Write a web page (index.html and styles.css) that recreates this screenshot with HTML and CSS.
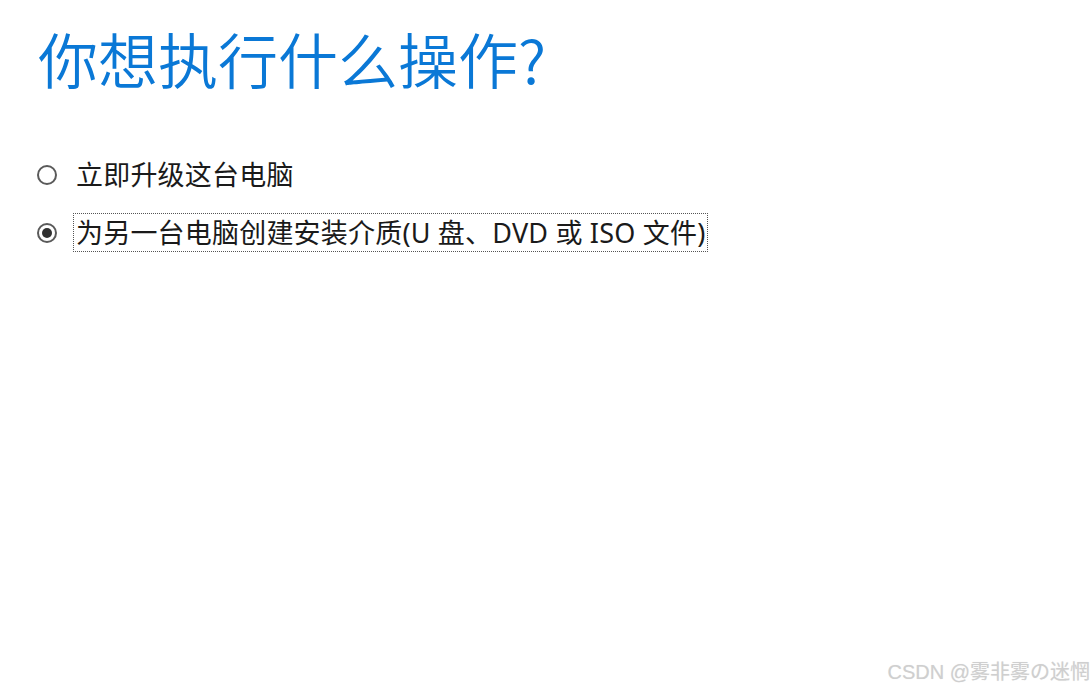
FILE: index.html
```html
<!DOCTYPE html>
<html lang="zh-CN">
<head>
<meta charset="utf-8">
<title>你想执行什么操作?</title>
<link rel="stylesheet" href="styles.css">
</head>
<body>
<main class="page">
  <h1 class="title">你想执行什么操作?</h1>
  <div class="options">
    <div class="option">
      <span class="radio"></span>
      <span class="label">立即升级这台电脑</span>
    </div>
    <div class="option">
      <span class="radio checked"></span>
      <span class="label focused">为另一台电脑创建安装介质(U 盘、DVD 或 ISO 文件)</span>
    </div>
  </div>
</main>
<div class="watermark">CSDN @雾非雾の迷惘</div>
</body>
</html>
```

FILE: styles.css
```css
html, body {
  margin: 0;
  padding: 0;
  background: #ffffff;
  width: 1092px;
  height: 689px;
  overflow: hidden;
  position: relative;
}

body {
  font-family: "Noto Sans", "Noto Sans CJK SC", sans-serif;
  color: #1a1a1a;
}

.page {
  padding: 23px 0 0 38px;
}

.title {
  margin: 0;
  font-family: "Noto Sans CJK SC", sans-serif;
  font-weight: 350;
  font-size: 60px;
  line-height: 70px;
  color: #0a78d6;
}

.options {
  margin-top: 62px;
  display: flex;
  flex-direction: column;
  gap: 19px;
}

.option {
  display: flex;
  align-items: center;
  gap: 16px;
  height: 39px;
}

.radio {
  box-sizing: border-box;
  width: 20px;
  height: 20px;
  margin-left: -1px;
  border: 2px solid #5a5a5a;
  border-radius: 50%;
  display: flex;
  align-items: center;
  justify-content: center;
  flex: none;
}

.radio.checked::after {
  content: "";
  width: 10px;
  height: 10px;
  border-radius: 50%;
  background: #303030;
}

.label {
  box-sizing: border-box;
  height: 39px;
  line-height: 37px;
  font-size: 27px;
  letter-spacing: 0.2px;
  padding: 0 2px 0 2px;
  border: 1px solid transparent;
  white-space: nowrap;
}

.label.focused {
  border: 1px dotted #555555;
}

.watermark {
  position: absolute;
  right: 2px;
  bottom: 5px;
  font-family: "Liberation Sans", "Noto Sans CJK SC", sans-serif;
  font-size: 20px;
  line-height: 24px;
  color: #cfcfcf;
  text-shadow: 0 0 1px #e6e6e6;
}
```
